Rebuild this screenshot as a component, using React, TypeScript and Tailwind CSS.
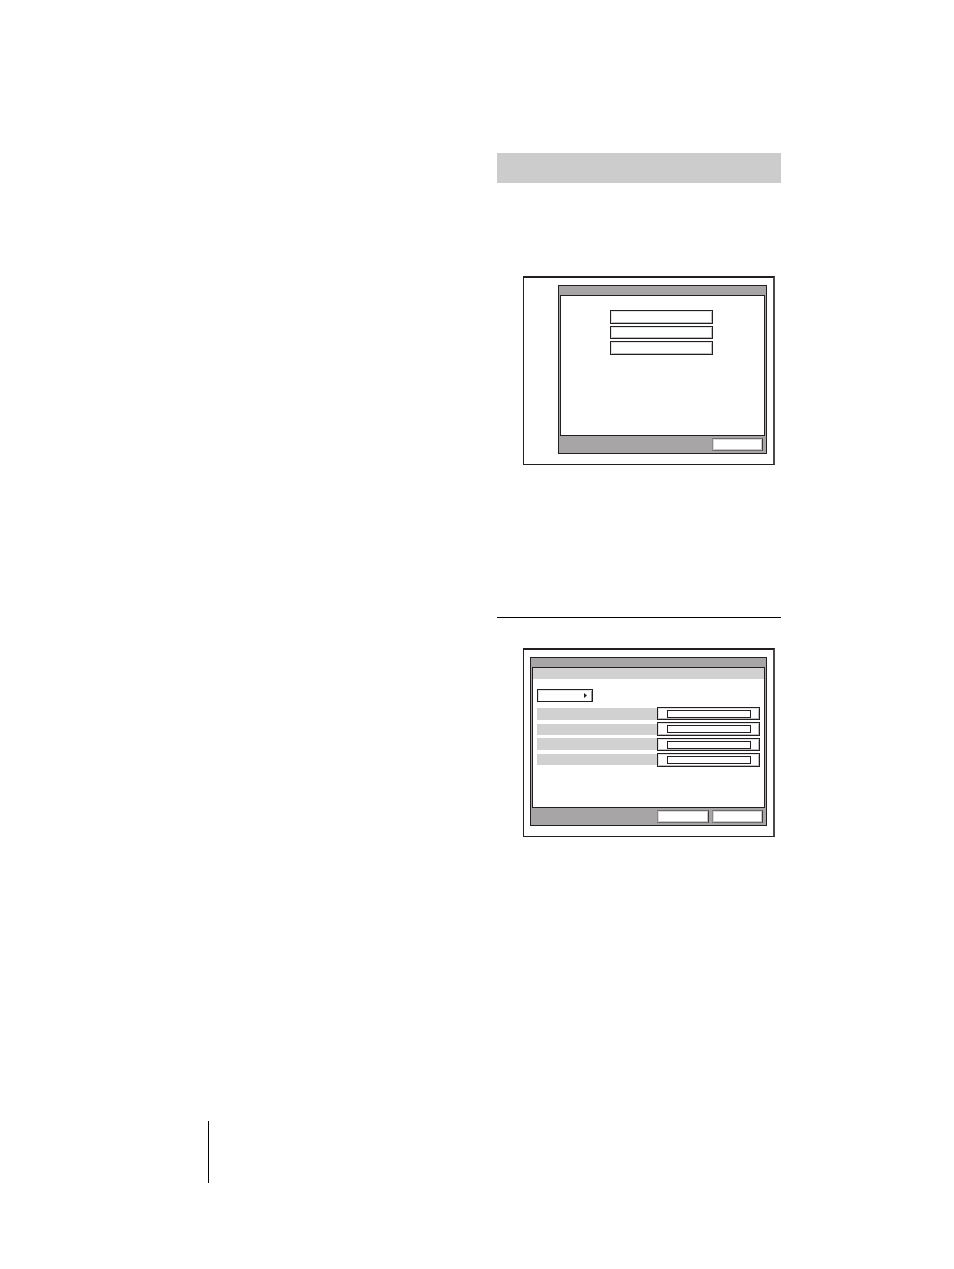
import type { ReactNode } from "react";

const bevel = "block border border-[#231f20] bg-white shadow-[inset_1px_1px_0_#e2e2e2,inset_-1px_-1px_0_#bdbdbd]";
const footerButton =
  "block h-[13px] border border-t-[#6d6b6c] border-l-[#8a8889] border-r-[#3a3738] border-b-[#6d6b6c] bg-white shadow-[inset_1px_1px_0_#d8d8d8,inset_-1px_-1px_0_#c8c8c8]";

const choices = [
  { name: "Option 1", height: "h-[14px]" },
  { name: "Option 2", height: "h-[13px]" },
  { name: "Option 3", height: "h-[14px]" },
];

const settings = [
  { name: "Setting 1", row: "h-[13px]", bar: "mt-px h-[12px]" },
  { name: "Setting 2", row: "h-[14px]", bar: "mt-[2px] h-[11px]" },
  { name: "Setting 3", row: "h-[13px]", bar: "h-[12px]" },
  { name: "Setting 4", row: "h-[14px]", bar: "mt-px h-[11px]" },
];

function Screen({ inset, children, footer }: { inset: string; children?: ReactNode; footer: ReactNode }) {
  return (
    <div
      className={`ml-[26px] mr-[6px] border border-t-2 border-r-2 border-[#231f20] border-r-[#4a4748] pt-[7px] pr-[6px] pb-[10px] ${inset}`}
    >
      <div className="border border-[#231f20] bg-[#a7a5a6] px-px pt-[9px]">
        <div className="h-[141px] border border-[#231f20] bg-white">{children}</div>
        <div className="flex h-[17px] justify-end gap-[3px] pt-[2px] pr-[2px]">{footer}</div>
      </div>
    </div>
  );
}

export default function App() {
  return (
    <div className="flex min-h-screen flex-col bg-white font-['Liberation_Sans',Arial,sans-serif]">
      <main className="mr-[173px] ml-auto w-[284px] pt-[153px]">
        <header className="h-[30px] bg-[#cccccc]" />

        <section className="pt-[93px]">
          <Screen
            inset="pl-[34px]"
            footer={<button type="button" aria-label="Close" className={`w-[51px] ${footerButton}`} />}
          >
            <div className="flex flex-col gap-[2px] pt-[14px] pl-[49px]">
              {choices.map((choice) => (
                <button
                  key={choice.name}
                  type="button"
                  aria-label={choice.name}
                  className={`w-[103px] ${choice.height} ${bevel}`}
                />
              ))}
            </div>
          </Screen>
        </section>

        <hr className="mt-[152px] border-t border-black" />

        <section className="pt-[30px]">
          <Screen
            inset="pl-[6px]"
            footer={
              <>
                <button type="button" aria-label="Save" className={`w-[52px] ${footerButton}`} />
                <button type="button" aria-label="Cancel" className={`w-[51px] ${footerButton}`} />
              </>
            }
          >
            <div className="h-[11px] bg-[#d1d1d1]" />
            <div className="pt-[10px] pr-[4px] pl-[4px]">
              <button
                type="button"
                aria-label="Next page"
                className={`flex h-[13px] w-[56px] items-center justify-end border border-[#231f20] bg-white pr-[5px] shadow-[inset_1px_1px_0_#e2e2e2,inset_-1px_0_0_#9a9a9a]`}
              >
                <svg width="3" height="5" viewBox="0 0 3 5" aria-hidden="true">
                  <path d="M0 0L3 2.5L0 5Z" fill="#231f20" />
                </svg>
              </button>
              <div className="flex flex-col gap-[2px] pt-[5px]">
                {settings.map((setting) => (
                  <label key={setting.name} className={`flex items-start ${setting.row}`}>
                    <span className={`flex-1 bg-[#d1d1d1] ${setting.bar}`} />
                    <span className={`h-full w-[103px] pt-[2px] pl-[9px] ${bevel}`}>
                      <input
                        type="text"
                        aria-label={setting.name}
                        className="block h-[8px] w-[84px] border border-[#231f20] bg-white text-[6px]"
                      />
                    </span>
                  </label>
                ))}
              </div>
            </div>
          </Screen>
        </section>
      </main>

      <footer className="mt-auto pb-[86px] pl-[208px]">
        <div className="h-[62px] border-l border-black" />
      </footer>
    </div>
  );
}
